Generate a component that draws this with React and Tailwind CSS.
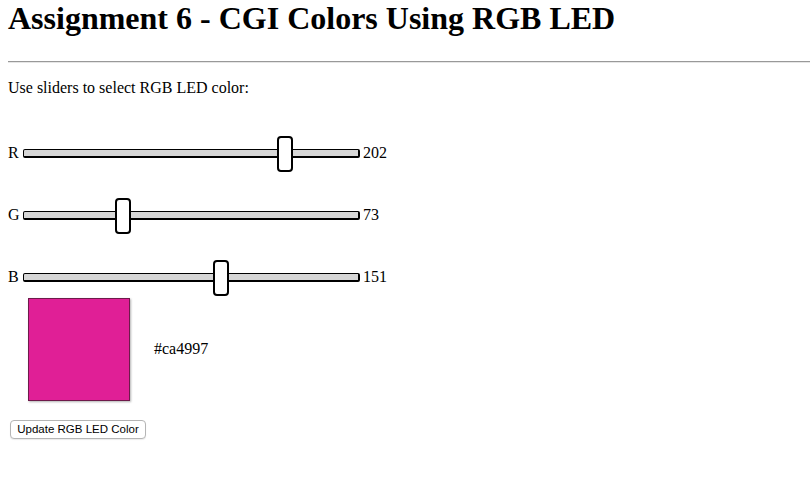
import React, { useState } from "react";

function Slider({ label, value, onChange }) {
  // track is 337px wide, thumb 16px
  const left = Math.round((value / 255) * 321);
  return (
    <div className="flex items-center h-[36px]">
      <span className="w-[15px] text-[16px] leading-none mb-[3px]">{label}</span>
      <div className="relative w-[337px] h-[36px]">
        <div className="absolute left-0 right-0 top-[13px] h-[9px] bg-[#d6d6d6] border border-black border-b-2 border-r-2 rounded-[2px]" />
        <div
          className="absolute top-0 w-[16px] h-[36px] bg-white border-2 border-black rounded-[4px]"
          style={{ left }}
        />
        <input
          type="range"
          min="0"
          max="255"
          value={value}
          onChange={(e) => onChange(Number(e.target.value))}
          className="absolute inset-0 w-full h-full opacity-0 cursor-pointer"
        />
      </div>
      <span className="ml-[3px] text-[16px] leading-none mb-[3px]">{value}</span>
    </div>
  );
}

export default function App() {
  const [rgb, setRgb] = useState({ r: 202, g: 73, b: 151 });

  const hex =
    "#" +
    [rgb.r, rgb.g, rgb.b].map((v) => v.toString(16).padStart(2, "0")).join("");

  return (
    <div className="bg-white text-black min-h-[488px] pl-2 font-['Liberation_Serif',serif]">
      <h1 className="text-[32px] font-bold leading-[37px] pt-0">
        Assignment 6 - CGI Colors Using RGB LED
      </h1>
      <hr className="mt-[24px] border-0 border-t border-t-[#999] border-b border-b-[#e6e6e6]" />
      <p className="mt-[16px] text-[16px] leading-[18px]">
        Use sliders to select RGB LED color:
      </p>

      <div className="mt-[39px] flex flex-col gap-[26px]">
        <Slider label="R" value={rgb.r} onChange={(v) => setRgb({ ...rgb, r: v })} />
        <Slider label="G" value={rgb.g} onChange={(v) => setRgb({ ...rgb, g: v })} />
        <Slider label="B" value={rgb.b} onChange={(v) => setRgb({ ...rgb, b: v })} />
      </div>

      {/* Color preview */}
      <div className="mt-[2px] flex items-center">
        <div className="ml-[20px] w-[102px] h-[103px] bg-[#e01f96] border border-[#6e1a4a] shadow-[1px_1px_2px_rgba(0,0,0,0.3)]" />
        <span className="ml-[24px] text-[16px] mb-[2px]">{hex}</span>
      </div>

      <button
        type="button"
        className="mt-[19px] ml-[2px] h-[19px] w-[136px] text-[11.5px] leading-none font-['Liberation_Sans',sans-serif] bg-white border border-[#b5b5b5] rounded-[4px] shadow-[0_1px_1px_rgba(0,0,0,0.08)]"
      >
        Update RGB LED Color
      </button>
    </div>
  );
}
